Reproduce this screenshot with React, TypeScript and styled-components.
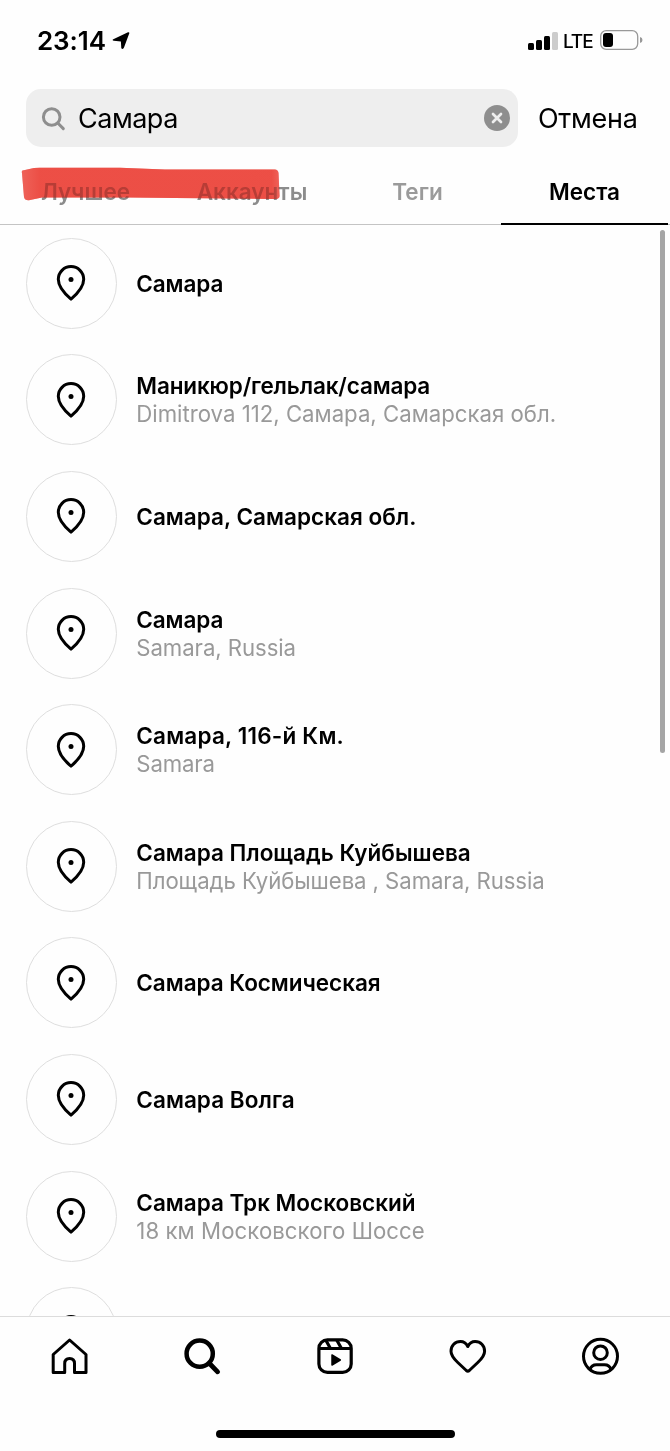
import React from "react";
import styled, { createGlobalStyle } from "styled-components";

const GlobalStyle = createGlobalStyle`
  * { box-sizing: border-box; }
  body {
    margin: 0;
    background: #fefefe;
    color: #000;
    font-family: Inter, "Liberation Sans", sans-serif;
    -webkit-font-smoothing: antialiased;
  }
`;

const Screen = styled.div`
  display: flex;
  flex-direction: column;
  width: 670px;
  height: 1451px;
  overflow: hidden;
`;

const StatusBar = styled.header`
  display: flex;
  align-items: center;
  height: 81px;
  padding: 0 27px 0 37px;
`;

const Clock = styled.span`
  flex: 1;
  display: flex;
  align-items: center;
  gap: 6px;
  font-size: 26px;
  font-weight: 600;
  letter-spacing: -0.1px;
`;

const Carrier = styled.span`
  width: 42px;
  margin-top: 1px;
  padding-left: 5px;
  font-size: 19px;
  font-weight: 500;
  letter-spacing: -1.1px;
`;

const SearchRow = styled.div`
  display: flex;
  align-items: center;
  height: 58px;
  margin-top: 8px;
  padding-left: 26px;
`;

const SearchField = styled.div`
  display: flex;
  align-items: center;
  width: 492px;
  height: 58px;
  padding: 0 8px 0 15px;
  border-radius: 15px;
  background: #eeeeee;
`;

const Query = styled.span`
  flex: 1;
  margin-left: 12px;
  font-size: 27px;
  letter-spacing: -0.5px;
`;

const Cancel = styled.span`
  margin-left: 20px;
  font-size: 27px;
  letter-spacing: -0.3px;
`;

const Tabs = styled.nav`
  position: relative;
  display: grid;
  grid-template-columns: repeat(4, 167px);
  height: 78px;
  border-bottom: 1px solid #c4c4c4;
`;

const Tab = styled.div<{ $active?: boolean; $indent?: number; $dark?: boolean }>`
  display: flex;
  justify-content: center;
  height: 78px;
  padding-top: 31px;
  padding-left: ${(p) => p.$indent ?? 0}px;
  border-bottom: 2px solid ${(p) => (p.$active ? "#000" : "transparent")};
  color: ${(p) => (p.$active ? "#000" : p.$dark ? "#8c8c8c" : "#9a9a9a")};
  font-size: 22.5px;
  font-weight: 600;
  line-height: 28px;
  white-space: nowrap;
`;

const Marker = styled.svg<{ $multiply?: boolean }>`
  position: absolute;
  left: 20px;
  top: 16px;
  filter: blur(0.5px);
  mix-blend-mode: ${(p) => (p.$multiply ? "multiply" : "normal")};
`;

const List = styled.main`
  position: relative;
  height: 1091px;
  overflow: hidden;
`;

const ScrollThumb = styled.div`
  position: absolute;
  right: 5px;
  top: 5px;
  width: 5px;
  height: 523px;
  border-radius: 3px;
  background: #a5a5a5;
`;

const Row = styled.div`
  display: flex;
  align-items: center;
  gap: 19.3px;
  height: 116.6px;
  padding-left: 26px;
`;

const PinCircle = styled.div`
  display: flex;
  align-items: center;
  justify-content: center;
  width: 91px;
  height: 91px;
  padding-right: 1px;
  border: 1px solid #dedede;
  border-radius: 50%;
`;

const PlaceText = styled.div`
  display: flex;
  flex-direction: column;
  align-items: flex-start;
  white-space: nowrap;
`;

const PlaceName = styled.span<{ $spacing: number }>`
  font-size: 22.5px;
  font-weight: 600;
  line-height: 27px;
  letter-spacing: ${(p) => p.$spacing}px;
`;

const PlaceDetail = styled.span<{ $spacing: number }>`
  margin-top: 1px;
  color: #999;
  font-size: 22.2px;
  line-height: 27px;
  letter-spacing: ${(p) => p.$spacing}px;
`;

const BottomBar = styled.footer`
  display: flex;
  flex-direction: column;
  align-items: center;
  height: 135px;
  border-top: 1px solid #dcdcdc;
`;

const NavIcons = styled.nav`
  display: flex;
  align-items: center;
  justify-content: space-between;
  width: 572px;
  height: 78px;
`;

const HomeIndicator = styled.div`
  width: 239px;
  height: 8px;
  margin-top: 35px;
  border-radius: 4px;
  background: #000;
`;

const Pin = () => (
  <svg width="30" height="38" viewBox="0 0 30 38" fill="none">
    <path d="M15 35.2C11.5 32.2 2.3 24.2 2.3 15.3a12.7 12.7 0 0 1 25.4 0C27.7 24.2 18.500 32.200 15 35.200Z" stroke="#000" strokeWidth="3" strokeLinejoin="round" />
    <circle cx="15" cy="15.500" r="2.500" fill="#000" />
  </svg>
);

const stroke =
  "M2 10Q1 7 5 7L14 5Q18 4.500 22 4.700H100L145 6.500H254Q258 6 258.500 10L259.500 32Q260 36 256 36L155 35L110 34.500H22L10 37Q5 38 4 34Z";

const places = [
  { name: "Самара", ns: -0.1 },
  { name: "Маникюр/гельлак/самара", ns: -0.15, detail: "Dimitrova 112, Самара, Самарская обл.", ds: 0 },
  { name: "Самара, Самарская обл.", ns: 0.03 },
  { name: "Самара", ns: -0.1, detail: "Samara, Russia", ds: -0.07 },
  { name: "Самара, 116-й Км.", ns: 0.2, detail: "Samara", ds: -0.15 },
  { name: "Самара Площадь Куйбышева", ns: 0, detail: "Площадь Куйбышева , Samara, Russia", ds: -0.08 },
  { name: "Самара Космическая", ns: -0.04 },
  { name: "Самара Волга", ns: 0.05 },
  { name: "Самара Трк Московский", ns: 0, detail: "18 км Московского Шоссе", ds: 0.07 },
  { name: "", ns: 0 },
];

export default function App() {
  return (
    <Screen>
      <GlobalStyle />
      <StatusBar>
        <Clock>
          23:14
          <svg width="18" height="18" viewBox="0 0 18 18">
            <path d="M17.300 1.300 12 15.600Q11 18 9.300 16.300L8.900 9.400 1.800 8.800Q-.2 8 1.300 7.200L16 .3Q17.600 0 17.300 1.300Z" fill="#000" />
          </svg>
        </Clock>
        <svg width="30" height="18" viewBox="0 0 30 18">
          <rect x="0" y="11" width="6" height="7" rx="1.500" />
          <rect x="8" y="8" width="6" height="10" rx="1.500" />
          <rect x="16" y="4" width="6" height="14" rx="1.500" />
          <rect x="24" y="0" width="6" height="18" rx="1.500" fill="#ccc" />
        </svg>
        <Carrier>LTE</Carrier>
        <svg width="43" height="21" viewBox="0 0 43 21">
          <rect x=".7" y=".7" width="37" height="18.600" rx="5.500" fill="none" stroke="#999" strokeWidth="1.300" />
          <rect x="3" y="3" width="10" height="14" rx="3" />
          <path d="M40 7q2.500.6 2.500 3T40 13Z" fill="#999" />
        </svg>
      </StatusBar>

      <SearchRow>
        <SearchField>
          <svg width="25" height="25" viewBox="0 0 25 25" fill="none" stroke="#8e8e8e" strokeWidth="3" strokeLinecap="round">
            <circle cx="10.700" cy="11" r="8.300" />
            <path d="m17 17.300 5.300 5.300" />
          </svg>
          <Query>Самара</Query>
          <svg width="26" height="26" viewBox="0 0 26 26">
            <circle cx="13" cy="13" r="13" fill="#8e8e8e" />
            <path d="m9 9 8 8m0-8-8 8" stroke="#eee" strokeWidth="2.700" strokeLinecap="round" />
          </svg>
        </SearchField>
        <Cancel>Отмена</Cancel>
      </SearchRow>

      <Tabs>
        <Tab $dark $indent={4}>Лучшее</Tab>
        <Tab $dark $indent={3}>Аккаунты</Tab>
        <Tab>Теги</Tab>
        <Tab $active>Места</Tab>
        <Marker $multiply width="262" height="40" viewBox="0 0 262 40">
          <path d={stroke} fill="#ed5047" />
        </Marker>
        <Marker width="262" height="40" viewBox="0 0 262 40">
          <defs>
            <linearGradient id="ink">
              <stop offset="0" stopColor="#f0746c" />
              <stop offset=".07" stopColor="#ec4d45" />
              <stop offset=".97" stopColor="#ec4d45" />
              <stop offset="1" stopColor="#f0746c" />
            </linearGradient>
          </defs>
          <path d={stroke} fill="url(#ink)" fillOpacity=".5" />
        </Marker>
      </Tabs>

      <List>
        {places.map((p, i) => (
          <Row key={i}>
            <PinCircle><Pin /></PinCircle>
            <PlaceText>
              <PlaceName $spacing={p.ns}>{p.name}</PlaceName>
              {p.detail && <PlaceDetail $spacing={p.ds}>{p.detail}</PlaceDetail>}
            </PlaceText>
          </Row>
        ))}
        <ScrollThumb />
      </List>

      <BottomBar>
        <NavIcons>
          <svg width="40" height="40" viewBox="0 0 40 40" fill="none" stroke="#000" strokeWidth="3" strokeLinejoin="round">
            <path d="M20.600 4 4.200 18.500V36.500H15.700V27.500q0-5 4.900-5t4.900 5v9H37V18.500Z" />
          </svg>
          <svg width="40" height="40" viewBox="0 0 40 40" fill="none" stroke="#000" strokeLinecap="round">
            <circle cx="17.700" cy="17.700" r="13.100" strokeWidth="4.500" />
            <path d="m28 28 7.600 7.800" strokeWidth="4.800" />
          </svg>
          <svg width="40" height="40" viewBox="0 0 40 40" fill="none" stroke="#000" strokeWidth="3.200" strokeLinejoin="round">
            <rect x="3.900" y="3.900" width="32.300" height="32.500" rx="8.500" />
            <path d="M4 12.500h32M10.700 4l4.500 8M21.700 4l4.500 8" />
            <path d="M17 19v10l8.300-5Z" fill="#000" strokeWidth="1.500" />
          </svg>
          <svg width="40" height="40" viewBox="0 0 40 40" fill="none" stroke="#000" strokeWidth="3" strokeLinejoin="round">
            <path d="M19.800 10.500C18 7 15.500 5.500 12.500 5.500 7 5.500 3 9.500 3 15.300 3 20 6 23 9.800 26.500L18.300 34.500Q19.800 35.800 21.300 34.500L29.800 26.500C33.600 23 36.600 20 36.600 15.300 36.600 9.500 32.600 5.500 27.100 5.500 24.100 5.500 21.600 7 19.800 10.500Z" />
          </svg>
          <svg width="40" height="40" viewBox="0 0 40 40" fill="none" stroke="#000" strokeWidth="3">
            <circle cx="19.500" cy="20.300" r="17" />
            <circle cx="19.500" cy="16.700" r="6.800" />
            <path d="M9 33.500q1.500-4.800 6.500-4.800h8q5 0 6.500 4.800" />
          </svg>
        </NavIcons>
        <HomeIndicator />
      </BottomBar>
    </Screen>
  );
}
